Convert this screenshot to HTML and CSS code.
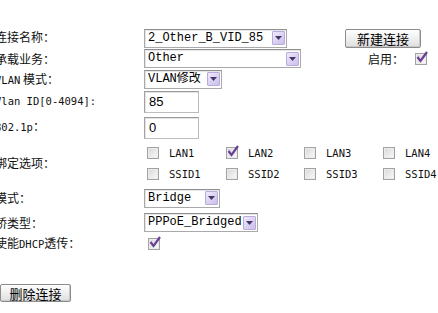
FILE: index.html
```html
<!DOCTYPE html>
<html lang="zh-CN">
<head>
<meta charset="utf-8">
<title>WAN 连接</title>
<link rel="stylesheet" href="styles.css">
</head>
<body>
<div class="page">
  <div class="form">
    <div class="row r1">
      <div class="lbl">连接名称：</div>
      <div class="ctl">
        <div class="sel w1"><span class="val">2_Other_B_VID_85</span><span class="arr"><svg width="7" height="4" viewBox="0 0 7 4"><path d="M0 0H7L3.5 4Z" fill="#45366a"/></svg></span></div>
      </div>
      <div class="extra"><button class="btn btn-new">新建连接</button></div>
    </div>
    <div class="row r2">
      <div class="lbl">承载业务：</div>
      <div class="ctl">
        <div class="sel w2"><span class="val">Other</span><span class="arr"><svg width="7" height="4" viewBox="0 0 7 4"><path d="M0 0H7L3.5 4Z" fill="#45366a"/></svg></span></div>
      </div>
      <div class="extra end">
        <span class="enable">启用：</span>
        <span class="cb on"><svg width="14" height="14" viewBox="0 0 14 14"><path d="M2.5 6 L5.5 10 L12 1" fill="none" stroke="#6a3f98" stroke-width="2.2"/></svg></span>
      </div>
    </div>
    <div class="row r3">
      <div class="lbl"><span class="en">VLAN</span> 模式：</div>
      <div class="ctl">
        <div class="sel w3"><span class="val">VLAN修改</span><span class="arr"><svg width="7" height="4" viewBox="0 0 7 4"><path d="M0 0H7L3.5 4Z" fill="#45366a"/></svg></span></div>
      </div>
    </div>
    <div class="row r4">
      <div class="lbl"><span class="en">Vlan ID[0-4094]:</span></div>
      <div class="ctl"><div class="inp">85</div></div>
    </div>
    <div class="row r5">
      <div class="lbl"><span class="en">802.1p</span>：</div>
      <div class="ctl"><div class="inp">0</div></div>
    </div>
    <div class="row r6">
      <div class="lbl">绑定选项：</div>
      <div class="ctl">
        <div class="bind">
          <label class="opt"><span class="cb"></span><span class="en">LAN1</span></label>
          <label class="opt"><span class="cb on"><svg width="14" height="14" viewBox="0 0 14 14"><path d="M2.5 6 L5.5 10 L12 1" fill="none" stroke="#6a3f98" stroke-width="2.2"/></svg></span><span class="en">LAN2</span></label>
          <label class="opt"><span class="cb"></span><span class="en">LAN3</span></label>
          <label class="opt"><span class="cb"></span><span class="en">LAN4</span></label>
          <label class="opt"><span class="cb"></span><span class="en">SSID1</span></label>
          <label class="opt"><span class="cb"></span><span class="en">SSID2</span></label>
          <label class="opt"><span class="cb"></span><span class="en">SSID3</span></label>
          <label class="opt"><span class="cb"></span><span class="en">SSID4</span></label>
        </div>
      </div>
    </div>
    <div class="row r7">
      <div class="lbl">模式：</div>
      <div class="ctl">
        <div class="sel w7"><span class="val">Bridge</span><span class="arr"><svg width="7" height="4" viewBox="0 0 7 4"><path d="M0 0H7L3.5 4Z" fill="#45366a"/></svg></span></div>
      </div>
    </div>
    <div class="row r8">
      <div class="lbl">桥类型：</div>
      <div class="ctl">
        <div class="sel w8"><span class="val">PPPoE_Bridged</span><span class="arr"><svg width="7" height="4" viewBox="0 0 7 4"><path d="M0 0H7L3.5 4Z" fill="#45366a"/></svg></span></div>
      </div>
    </div>
    <div class="row r9">
      <div class="lbl">使能<span class="en">DHCP</span>透传：</div>
      <div class="ctl">
        <span class="cb on dhcp"><svg width="14" height="14" viewBox="0 0 14 14"><path d="M2.5 6 L5.5 10 L12 1" fill="none" stroke="#6a3f98" stroke-width="2.2"/></svg></span>
      </div>
    </div>
  </div>
  <div class="actions"><button class="btn btn-del">删除连接</button></div>
</div>
</body>
</html>
```

FILE: styles.css
```css
html, body {
  margin: 0;
  padding: 0;
  background: #ffffff;
}

body {
  width: 438px;
  height: 313px;
  overflow: hidden;
  font-family: "Noto Sans CJK SC", "Liberation Sans", sans-serif;
  font-size: 12px;
  color: #111;
}

.page {
  padding-top: 26px;
  margin-left: -5px;
}

.form {
  display: flex;
  flex-direction: column;
}

.row {
  display: grid;
  grid-template-columns: 149px 201px 83px;
  align-items: center;
}

.r1 { height: 22px; }
.r2 { height: 21px; }
.r3 { height: 20px; }
.r4 { height: 26px; }
.r5 { height: 26px; }
.r6 { height: 45px; }
.r7 { height: 24px; }
.r8 { height: 25px; }
.r9 { height: 17px; }

.lbl {
  white-space: nowrap;
  line-height: 14px;
}

.r4 .lbl { margin-top: -4px; }
.r5 .lbl { margin-top: -3px; }
.r6 .lbl { margin-top: -2px; }

.en {
  font-family: "DejaVu Sans Mono", monospace;
  font-size: 10.5px;
}

.ctl {
  display: flex;
  align-items: center;
}

.extra {
  display: flex;
  align-items: center;
}

.extra.end {
  justify-content: flex-end;
  gap: 11px;
  padding-right: 1px;
}

.enable {
  font-size: 12px;
}

/* select look-alike */
.sel {
  box-sizing: border-box;
  height: 19px;
  display: flex;
  align-items: center;
  border: 1px solid #a9a9ab;
  border-top-color: #8f8f93;
  box-shadow: inset 1px 1px 0 #e6e6e6;
  background: #fff;
  padding: 0 1px 0 3px;
}

.r1 .sel { margin-top: 2px; }

.w1 { width: 143px; }
.w2 { width: 157px; }
.w3 { width: 78px; }
.w7 { width: 76px; }
.w8 { width: 114px; }

.val {
  flex: 1;
  font-family: "Liberation Mono", "Noto Sans CJK SC", monospace;
  font-size: 12px;
  line-height: 15px;
  color: #000;
  white-space: nowrap;
  overflow: hidden;
}

.arr {
  box-sizing: border-box;
  width: 13px;
  height: 14px;
  display: flex;
  align-items: center;
  justify-content: center;
  border: 1px solid #b9abdc;
  border-radius: 1px;
  background: linear-gradient(135deg, #efeafb 0%, #d9cff1 60%, #cbbfe9 100%);
}

/* text input look-alike */
.inp {
  box-sizing: border-box;
  width: 55px;
  height: 22px;
  border: 1px solid #bdbdbd;
  border-top-color: #9a9a9a;
  border-left-color: #a3a3a3;
  box-shadow: inset 1px 1px 0 #e4e4e4;
  padding: 2px 0 0 4px;
  font-family: "Liberation Sans", sans-serif;
  font-size: 13px;
  line-height: 16px;
  color: #000;
}

/* checkbox look-alike */
.cb {
  position: relative;
  box-sizing: border-box;
  width: 12px;
  height: 12px;
  flex: none;
  border: 1px solid #a2a2a2;
  background: linear-gradient(135deg, #d6d6d6 0%, #e9e9e9 50%, #fbfbfb 100%);
  box-shadow: inset 0 0 0 1px #ececec;
}

.cb svg {
  position: absolute;
  left: -1px;
  top: -3px;
}

.bind {
  display: grid;
  grid-template-columns: 79px 78px 79px 79px;
  grid-auto-rows: 21px;
  padding-left: 3px;
}

.opt {
  display: flex;
  align-items: center;
  gap: 10px;
  white-space: nowrap;
}

.opt .en {
  color: #111;
}

.dhcp {
  margin-left: 4px;
}

/* buttons */
.btn {
  box-sizing: border-box;
  margin: 0;
  padding: 0;
  font-family: "Noto Sans CJK SC", sans-serif;
  font-size: 13px;
  line-height: 15px;
  color: #000;
  border: 1px solid #8c8c8c;
  border-radius: 2px;
  background: linear-gradient(#fefefe 0%, #f1f1f1 45%, #dedede 100%);
  box-shadow: inset -1px -1px 0 #c9c9c9;
  cursor: default;
}

.btn-new {
  width: 76px;
  height: 19px;
  margin-top: 2px;
}

.actions {
  margin-top: 32px;
  padding-left: 5px;
}

.btn-del {
  width: 71px;
  height: 18px;
}
```
